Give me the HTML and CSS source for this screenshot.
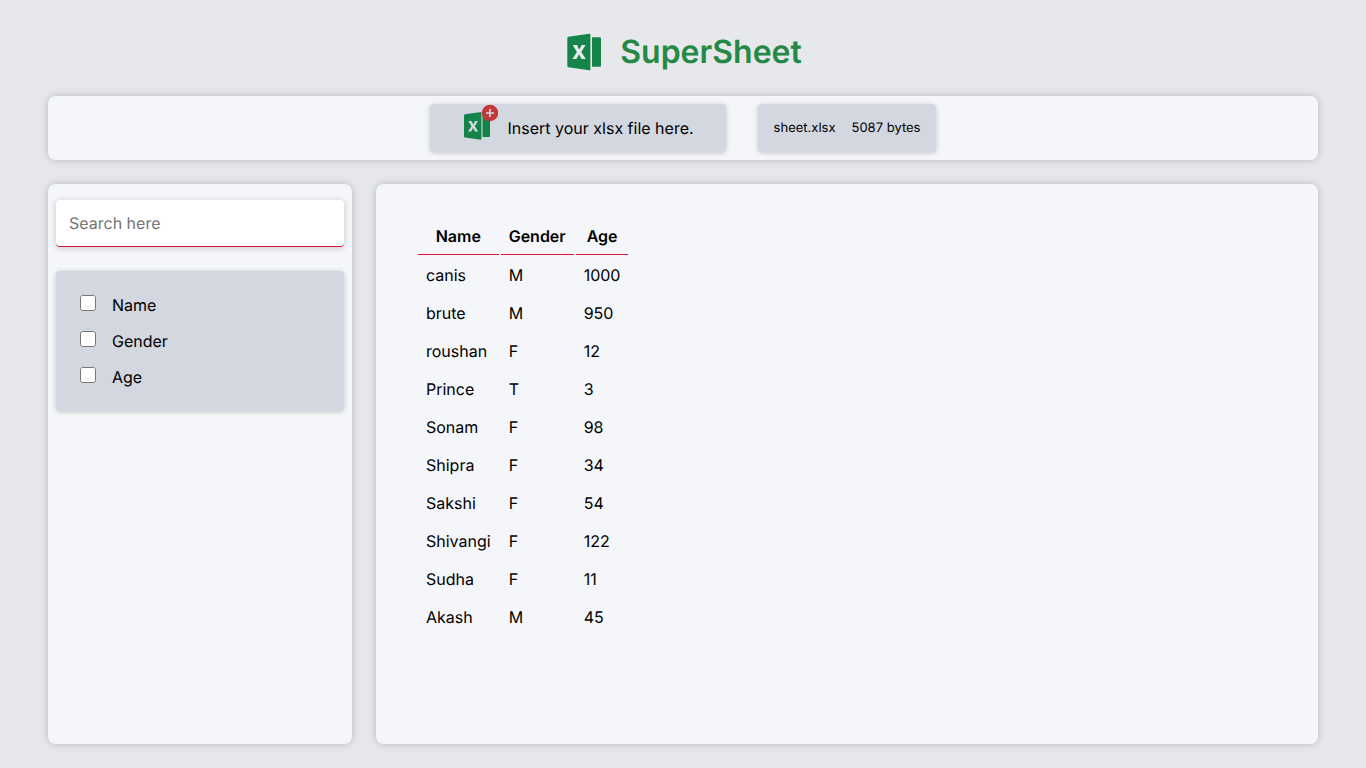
FILE: index.html
```html
<!DOCTYPE html>
<html lang="en">
<head>
<meta charset="utf-8">
<meta name="viewport" content="width=device-width, initial-scale=1">
<title>SuperSheet</title>
<link rel="stylesheet" href="styles.css">
</head>
<body>
<div class="app">
  <header class="brand">
    <svg class="brand-icon" viewBox="0 0 40 40" aria-hidden="true">
      <path fill="#15834a" d="M28 5.2h7.6q1.4 0 1.4 1.4v26.8q0 1.4-1.4 1.4H28z"/>
      <path fill="#15834a" d="M4.3 4.7 25.4 1.7q1-.1 1 .9v34.8q0 1-1 .9L4.3 35.3q-1-.2-1-1.200V5.900q0-1 1-1.200z"/>
      <path fill="#e6e8ec" d="M8.700 13.100h4.300l2.200 4.400 2.500-4.400h3.900l-4.300 6.800 4.500 7h-4.300l-2.500-4.600-2.500 4.600H8.400l4.500-6.900z"/>
    </svg>
    <h1 class="brand-name">SuperSheet</h1>
  </header>

  <section class="panel toolbar">
    <label class="card upload" for="file">
      <svg class="upload-icon" viewBox="0 0 36 36" aria-hidden="true">
        <path fill="#15834a" d="M20.500 11H28v21q0 1-1 1h-6.500z"/>
        <path fill="#15834a" d="M2 11.400q0-1 1-1.200L19.400 8v27.700L3 33.400q-1-.1-1-1z"/>
        <path fill="#d3d7e0" d="M6.300 17h3.200l1.700 3.400 1.900-3.400H16l-3.200 5.100 3.400 5.300H13l-1.900-3.500-1.900 3.500H6l3.500-5.200z"/>
        <circle cx="28" cy="9" r="8.200" fill="#c23839"/>
        <path d="M28 5v8M24 9h8" fill="none" stroke="#d9dce3" stroke-width="1.600"/>
      </svg>
      <span>Insert your xlsx file here.</span>
      <input class="upload-input" id="file" type="file" accept=".xlsx">
    </label>
    <div class="card file-info">
      <span>sheet.xlsx</span>
      <span>5087 bytes</span>
    </div>
  </section>

  <main class="workspace">
    <aside class="panel sidebar">
      <input class="search" type="search" placeholder="Search here" aria-label="Search here">
      <div class="card filters">
        <label class="filter"><input class="filter-box" type="checkbox"><span>Name</span></label>
        <label class="filter"><input class="filter-box" type="checkbox"><span>Gender</span></label>
        <label class="filter"><input class="filter-box" type="checkbox"><span>Age</span></label>
      </div>
    </aside>
    <section class="panel sheet">
      <table class="data">
        <thead>
          <tr><th>Name</th><th>Gender</th><th>Age</th></tr>
        </thead>
        <tbody>
          <tr><td>canis</td><td>M</td><td>1000</td></tr>
          <tr><td>brute</td><td>M</td><td>950</td></tr>
          <tr><td>roushan</td><td>F</td><td>12</td></tr>
          <tr><td>Prince</td><td>T</td><td>3</td></tr>
          <tr><td>Sonam</td><td>F</td><td>98</td></tr>
          <tr><td>Shipra</td><td>F</td><td>34</td></tr>
          <tr><td>Sakshi</td><td>F</td><td>54</td></tr>
          <tr><td>Shivangi</td><td>F</td><td>122</td></tr>
          <tr><td>Sudha</td><td>F</td><td>11</td></tr>
          <tr><td>Akash</td><td>M</td><td>45</td></tr>
        </tbody>
      </table>
    </section>
  </main>
</div>
</body>
</html>
```
FILE: styles.css
```css
* {
  box-sizing: border-box;
}

body {
  margin: 0;
  background: #e6e8ec;
  color: #000;
  font: 16px/20px Inter, sans-serif;
  text-rendering: geometricPrecision;
}

.app {
  display: flex;
  flex-direction: column;
  gap: 24px;
  min-height: 100vh;
  padding: 32px 48px 24px;
}

.brand {
  display: flex;
  align-items: center;
  justify-content: center;
  gap: 16px;
}

.brand-icon {
  width: 40px;
  height: 40px;
}

.brand-name {
  margin: 0;
  color: #248944;
  font-size: 32px;
  font-weight: 600;
  line-height: 40px;
}

.panel {
  border-radius: 8px;
  background: #f4f6fa;
  box-shadow: 0 0 8px rgba(0, 0, 0, 0.2);
}

.card {
  border-radius: 4px;
  background: #d3d7e0;
  box-shadow: 0 1px 5px rgba(0, 0, 0, 0.2);
}

.toolbar {
  display: flex;
  justify-content: center;
  gap: 32px;
  padding: 8px;
}

.upload {
  position: relative;
  display: flex;
  align-items: center;
  gap: 10px;
  min-height: 48px;
  padding: 0 32px;
  cursor: pointer;
}

.upload-icon {
  align-self: flex-start;
  width: 36px;
  height: 36px;
}

.upload-input {
  position: absolute;
  width: 1px;
  height: 1px;
  opacity: 0;
}

.file-info {
  display: flex;
  align-items: center;
  gap: 16px;
  padding: 0 16px;
  font-size: 13px;
}

.workspace {
  display: grid;
  flex: 1;
  grid-template-columns: 304px 1fr;
  gap: 24px;
}

.sidebar {
  display: flex;
  flex-direction: column;
  gap: 24px;
  padding: 16px 8px;
}

.search {
  width: 100%;
  height: 47px;
  padding: 0 13px;
  border: 0;
  border-bottom: 1px solid crimson;
  border-radius: 4px;
  background: #fff;
  box-shadow: 0 1px 6px rgba(0, 0, 0, 0.2);
  font: inherit;
  text-rendering: inherit;
  appearance: none;
}

.search::placeholder {
  color: #757575;
}

.filters {
  display: flex;
  flex-direction: column;
  gap: 16px;
  padding: 24px;
}

.filter {
  display: flex;
  align-items: flex-start;
  gap: 16px;
}

.filter-box {
  width: 16px;
  height: 16px;
  margin: 0;
}

.sheet {
  padding: 32px 40px;
}

.data {
  border-spacing: 2px;
}

.data th,
.data td {
  padding: 8px;
}

.data th {
  border-bottom: 1px solid crimson;
  font-weight: 600;
}
```
